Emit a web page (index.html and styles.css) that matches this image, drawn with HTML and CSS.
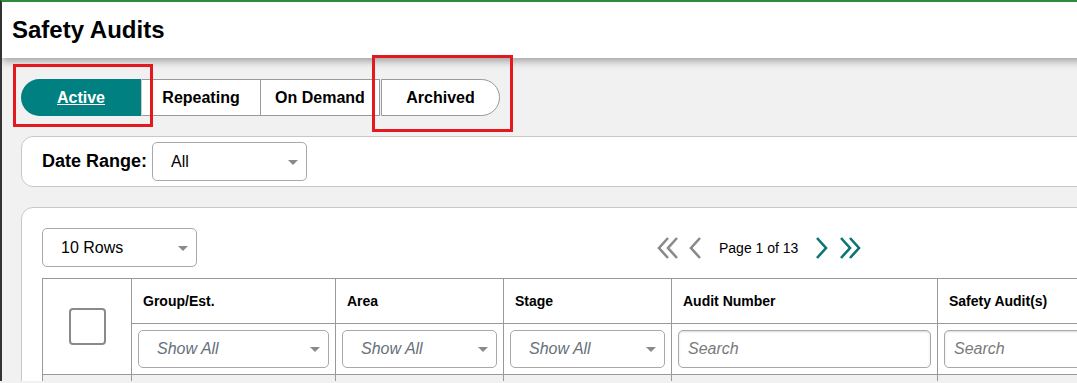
FILE: index.html
```html
<!DOCTYPE html>
<html lang="en">
<head>
    <meta charset="UTF-8">
    <meta name="viewport" content="width=device-width, initial-scale=1.0">
    <title>Safety Audits</title>
    <link rel="stylesheet" href="styles.css">
</head>
<body>
    <header class="page-header">
        <h1>Safety Audits</h1>
    </header>

    <main class="content">
        <div class="tabs">
            <a class="tab tab-first active" href="#">Active</a>
            <a class="tab" href="#">Repeating</a>
            <a class="tab" href="#">On Demand</a>
            <a class="tab tab-last" href="#">Archived</a>
        </div>

        <div class="card filter-card">
            <label class="filter-label">Date Range:</label>
            <div class="select date-select"><span>All</span><i class="caret"></i></div>
        </div>

        <div class="card table-card">
            <div class="toolbar">
                <div class="select rows-select"><span>10 Rows</span><i class="caret"></i></div>
                <div class="pager">
                    <svg class="chev double" viewBox="0 0 24 24"><polyline points="12,2 3,12 12,22"/><polyline points="21,2 12,12 21,22"/></svg>
                    <svg class="chev single" viewBox="0 0 14 24"><polyline points="12,2 3,12 12,22"/></svg>
                    <span class="page-text">Page 1 of 13</span>
                    <svg class="chev single on" viewBox="0 0 14 24"><polyline points="2,2 11,12 2,22"/></svg>
                    <svg class="chev double on" viewBox="0 0 24 24"><polyline points="3,2 12,12 3,22"/><polyline points="12,2 21,12 12,22"/></svg>
                </div>
            </div>

            <table class="grid">
                <colgroup>
                    <col class="c-check">
                    <col class="c-group">
                    <col class="c-area">
                    <col class="c-stage">
                    <col class="c-number">
                    <col class="c-audit">
                </colgroup>
                <tr class="head-row">
                    <th rowspan="2" class="check-cell"><span class="checkbox"></span></th>
                    <th>Group/Est.</th>
                    <th>Area</th>
                    <th>Stage</th>
                    <th>Audit Number</th>
                    <th>Safety Audit(s)</th>
                </tr>
                <tr class="filter-row">
                    <td><div class="select cell-select"><span>Show All</span><i class="caret"></i></div></td>
                    <td><div class="select cell-select"><span>Show All</span><i class="caret"></i></div></td>
                    <td><div class="select cell-select"><span>Show All</span><i class="caret"></i></div></td>
                    <td><input class="search" type="text" placeholder="Search"></td>
                    <td><input class="search" type="text" placeholder="Search"></td>
                </tr>
                <tr class="body-row">
                    <td></td><td></td><td></td><td></td><td></td><td></td>
                </tr>
            </table>
        </div>

        <!-- review markers -->
        <div class="mark mark-active"></div>
        <div class="mark mark-archived"></div>
    </main>
</body>
</html>
```

FILE: styles.css
```css
html {
    overflow: hidden;
}

body {
    margin: 0;
    font-family: 'Liberation Sans', Arial, sans-serif;
    background: #f1f1f1;
    color: #000;
    border-top: 2px solid #2e8b3c;
    border-left: 2px solid #333;
    height: 381px;
    box-sizing: border-box;
    overflow: hidden;
}

.page-header {
    background: #fff;
    height: 56px;
    padding-left: 10px;
    display: flex;
    align-items: center;
    box-shadow: 0 3px 8px rgba(0, 0, 0, 0.35);
    position: relative;
    z-index: 2;
    width: 1300px;
}

.page-header h1 {
    margin: 0;
    font-size: 24px;
    font-weight: bold;
    padding-bottom: 1px;
}

.content {
    padding: 21px 0 0 19px;
    width: 1400px;
    position: relative;
}

/* tabs */
.tabs {
    display: flex;
    height: 37px;
}

.tab {
    width: 119px;
    height: 37px;
    box-sizing: border-box;
    background: #fff;
    border: 1px solid #999;
    border-left: none;
    display: flex;
    align-items: center;
    justify-content: center;
    color: #000;
    font-weight: bold;
    font-size: 16px;
    text-decoration: none;
}

.tab-first {
    width: 121px;
    border-radius: 19px 0 0 19px;
    border: none;
    border-right: 1px solid #ccc;
}

.tab.active {
    background: #008080;
    color: #fff;
    text-decoration: underline;
}

.tab-last {
    border-left: 1px solid #999;
    margin-left: 1px;
    border-radius: 0 19px 19px 0;
}

/* cards */
.card {
    background: #fff;
    border: 1px solid #c8c8c8;
    border-radius: 12px;
    box-sizing: border-box;
}

.filter-card {
    margin-top: 20px;
    height: 51px;
    display: flex;
    align-items: center;
    padding-left: 20px;
}

.filter-label {
    font-weight: bold;
    font-size: 18px;
    margin-right: 5px;
}

.select {
    position: relative;
    box-sizing: border-box;
    border: 1px solid #a8a8a8;
    border-radius: 5px;
    background: #fff;
    display: flex;
    align-items: center;
}

.caret {
    position: absolute;
    right: 8px;
    top: 50%;
    margin-top: -2px;
    width: 0;
    height: 0;
    border-left: 5px solid transparent;
    border-right: 5px solid transparent;
    border-top: 5px solid #8a8a8a;
}

.date-select {
    width: 155px;
    height: 39px;
    padding-left: 18px;
    font-size: 16px;
}

.table-card {
    margin-top: 20px;
    padding: 20px 0 0 20px;
    height: 200px;
}

.toolbar {
    display: flex;
    align-items: center;
    height: 39px;
}

.rows-select {
    width: 155px;
    height: 39px;
    padding-left: 18px;
    font-size: 16px;
}

.pager {
    display: flex;
    align-items: center;
    margin-left: 459px;
    height: 39px;
}

.chev {
    height: 24px;
    fill: none;
    stroke: #8a8a8a;
    stroke-width: 2.6;
}

.chev.double {
    width: 24px;
}

.chev.single {
    width: 14px;
}

.chev.on {
    stroke: #0d7474;
}

.chev.double + .chev.single {
    margin-left: 8px;
}

.page-text {
    font-size: 14px;
    margin: 0 17px 0 17px;
}

.chev.single.on {
    margin-right: 9px;
}

/* table */
.grid {
    margin-top: 11px;
    border-collapse: collapse;
    table-layout: fixed;
    width: 1180px;
}

.c-check { width: 89px; }
.c-group { width: 204px; }
.c-area { width: 168px; }
.c-stage { width: 168px; }
.c-number { width: 266px; }
.c-audit { width: 285px; }

.grid th,
.grid td {
    border: 1px solid #999;
    padding: 0 6px;
    text-align: left;
}

.head-row th {
    height: 44px;
    font-size: 14px;
    font-weight: bold;
    padding-left: 11px;
}

.grid th.check-cell {
    padding: 0;
    text-align: center;
    vertical-align: middle;
}

.checkbox {
    display: inline-block;
    vertical-align: middle;
    width: 33px;
    height: 33px;
    border: 2px solid #8a8a8a;
    border-radius: 4px;
}

.filter-row td {
    height: 50px;
}

.cell-select {
    width: 100%;
    height: 38px;
    padding-left: 18px;
    font-size: 16px;
    font-style: italic;
    color: #67707a;
}

.search {
    width: 100%;
    height: 38px;
    box-sizing: border-box;
    border: 1px solid #a8a8a8;
    border-radius: 5px;
    padding: 0 9px;
    font-family: 'Liberation Sans', Arial, sans-serif;
    font-size: 16px;
    box-shadow: inset 0 1px 2px rgba(0, 0, 0, 0.15);
}

.search::placeholder {
    font-style: italic;
    color: #7a7a7a;
}

.body-row td {
    height: 30px;
    background: #f1f1f1;
}

/* review markers */
.mark {
    position: absolute;
    z-index: 3;
    border: 3px solid #e3191f;
    box-sizing: border-box;
}

.mark-active {
    left: 11px;
    top: 6px;
    width: 140px;
    height: 63px;
}

.mark-archived {
    left: 370px;
    top: -3px;
    width: 141px;
    height: 77px;
}
```
